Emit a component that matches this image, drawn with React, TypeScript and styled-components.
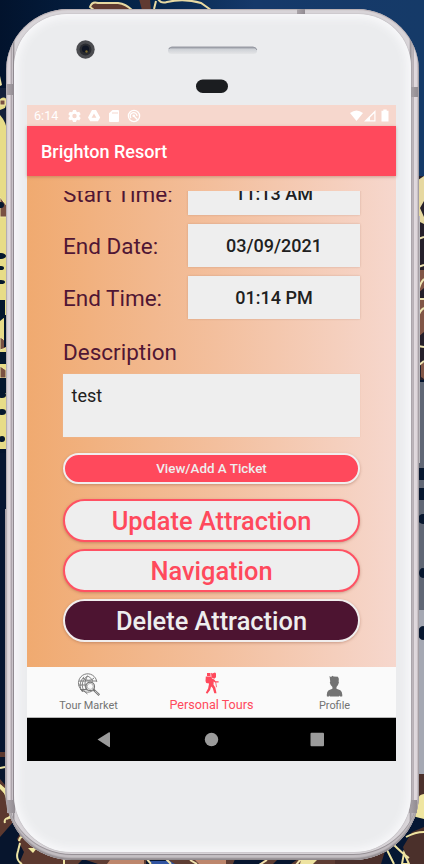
import React from "react";
import styled, { createGlobalStyle } from "styled-components";

const GlobalStyle = createGlobalStyle`
  * { box-sizing: border-box; }
  body { margin: 0; overflow: hidden; font-family: Roboto, "Liberation Sans", sans-serif; }
  button { font-family: inherit; margin: 0; padding: 0; cursor: pointer; }
`;

const Desktop = styled.main`
  position: relative;
  width: 424px;
  height: 864px;
  padding: 9px 5px 4px 6px;
  overflow: hidden;
  background: #03142f;
`;

const Wallpaper = styled.svg`
  position: absolute;
  inset: 0;
`;

const Frame = styled.div`
  position: relative;
  width: 412.5px;
  height: 851px;
  padding: 5px 8px 8px 8px;
  border-radius: 62px 62px 66px 66px;
  background: linear-gradient(90deg, #b5adb3 0, #dbd4da 1.5px, #e0d9de 4px, #a49ca2 5.3px, #d3cdd2 6.3px, #8e888e 7.6px, #d8d4d8 9px, #d8d4d8 403px, #8e888e 405px, #d3cdd2 406px, #a49ca2 407px, #e0d9de 408.5px, #ddd5da 411px, #aaa2a8 412.5px);
  box-shadow: inset 0 1px 1px #b7adb1, inset 0 -2px 2px #8e888c, inset 0 -5px 1px #c8c3c7, inset 0 -6px 0 #918b90;
`;

const Band = styled.i<{ $x: number; $y: number; $w: number; $h: number }>`
  position: absolute;
  left: ${p => p.$x}px;
  top: ${p => p.$y}px;
  width: ${p => p.$w}px;
  height: ${p => p.$h}px;
  background: linear-gradient(90deg, #aaa4a9, #928c92);
`;

const Face = styled.div`
  position: relative;
  height: 838px;
  padding: 91px 14px 0 13px;
  border-radius: 53px 53px 57px 57px;
  background: #ebecee;
  box-shadow: inset 0 0 9px 4px #f8f8fa, 0 0 1px #777278;
`;

const Hardware = styled.svg`
  position: absolute;
  left: 0;
  top: 0;
`;

const Screen = styled.section`
  display: flex;
  flex-direction: column;
  width: 369px;
  height: 656px;
  background: linear-gradient(90deg, #f0aa70 0%, #f3bf9d 51%, #f6d7cd 100%);
`;

const StatusBar = styled.div`
  display: flex;
  align-items: center;
  height: 21px;
  padding: 0 5px 0 7px;
  color: #fff;
  background: #f6d7cd;
  font-size: 12.6px;
`;

const StatusIcons = styled.svg`
  margin-left: auto;
`;

const NoticeIcons = styled.svg`
  margin-left: 9px;
`;

const AppBar = styled.header`
  position: relative;
  flex: none;
  display: flex;
  align-items: center;
  height: 50px;
  padding: 1px 14px 0;
  color: #fff;
  background: #ff495c;
  box-shadow: 0 1px 3px #8b4b3b66;
  font-size: 18px;
  font-weight: 500;
`;

const Viewport = styled.div`
  flex: none;
  height: 476px;
  margin-top: 15px;
  padding: 0 36px;
  overflow: hidden;
`;

const Form = styled.div`
  margin-top: -19px;
`;

const Row = styled.div`
  display: grid;
  grid-template-columns: 125px 172px;
  height: 43px;
  margin-bottom: 9px;
`;

const Label = styled.span`
  align-self: center;
  color: #501634;
  font-size: 22.5px;
  line-height: 27px;
  padding-top: 1px;
`;

const Value = styled.button`
  border: 0;
  color: #202020;
  background: #eee;
  font-size: 18px;
  font-weight: 500;
  box-shadow: 0 0 2px #9f725f60;
`;

const DescriptionTitle = styled.h2`
  margin: 20px 0 8px;
  color: #501634;
  font-size: 22.5px;
  font-weight: 400;
  line-height: 27px;
`;

const Description = styled.div`
  height: 62.5px;
  padding: 11px 8.5px;
  color: #202020;
  background: #eee;
  box-shadow: 0 0 1px #e4bda5;
  font-size: 18px;
  line-height: 22px;
`;

const Actions = styled.div`
  display: flex;
  flex-direction: column;
  gap: 7px;
  margin-top: 16.5px;
`;

const Action = styled.button<{ $tone: "ticket" | "light" | "dark" }>`
  width: 297px;
  height: ${p => p.$tone === "ticket" ? 31 : 43}px;
  margin-bottom: ${p => p.$tone === "ticket" ? 8 : 0}px;
  border: 2px solid ${p => p.$tone === "light" ? "#ff5163" : "#f1eeee"};
  border-radius: 22px;
  color: ${p => p.$tone === "light" ? "#ff495c" : "#eee"};
  background: ${p => p.$tone === "light" ? "#eee" : p.$tone === "dark" ? "#4d1431" : "#ff495c"};
  box-shadow: 0 1px 3px #82432e60;
  font-size: ${p => p.$tone === "ticket" ? 13.4 : 25.4}px;
  font-weight: 500;
  line-height: 1;
  padding-top: ${p => p.$tone === "ticket" ? 1 : 2}px;
`;

const Tabs = styled.nav`
  flex: none;
  display: grid;
  grid-template-columns: repeat(3, 1fr);
  height: 51px;
  background: #fafafa;
  border-bottom: 1px solid #b6b6b6;
`;

const Tab = styled.div<{ $active?: boolean }>`
  display: flex;
  flex-direction: column;
  align-items: center;
  justify-content: flex-end;
  padding-bottom: ${p => p.$active ? 5 : 4}px;
  color: ${p => p.$active ? "#ff495c" : "#737373"};
  font-size: ${p => p.$active ? 12.6 : 10.9}px;
  line-height: 14px;
  svg { margin-bottom: ${p => p.$active ? 3 : 2}px; }
`;

const SystemBar = styled.div`
  flex: none;
  height: 43px;
  background: #000;
`;

/* Patterned wallpaper visible around the handset. */
function Background() {
  return <Wallpaper width="424" height="864" viewBox="0 0 424 864">
    <defs>
      <linearGradient id="sky"><stop stopColor="#02132d" /><stop offset=".35" stopColor="#06264c" /><stop offset=".6" stopColor="#15396a" /><stop offset="1" stopColor="#153a68" /></linearGradient>
    </defs>
    <path fill="url(#sky)" d="M0 0h424v180H0z" />
    <g fill="#603a31" stroke="#e8d9a2" strokeWidth="2">
      <path d="M90 7Q92 1 98 3h20q8 1 14 7H94z" /><path d="m139-1 3 11h9l-1-11z" stroke="none" /><path d="m154 9 2-8M158-1q3 5 9 3 17-4 34 1l10 7" fill="none" />
    </g>
    <path d="M0 76 2 85l-2 1z" fill="#efe5a4" />
    <path d="M0 88h7v13l-4 6 3 4v97H0z" fill="#14213a" />
    <path d="M0 99q6-4 7 3l-2 6-5 2zM0 115q7 8 7 17v317H0z" fill="#e7dc88" />
    <path d="M0 100h5v5H0zM0 197l7 9v11H0zM0 337q7 3 6 11l-6 2zM0 366l6 4v8H0z" fill="#795141" stroke="#efe5a4" />
    <g fill="#04172d"><path d="M0 300h5v17l-5 4zM4 315h3v32H4zM0 352h7v12H0zM0 378h6v15H0z" /><ellipse cx="1" cy="205" rx="3" ry="3" /><ellipse cx="1" cy="256" rx="5" ry="3" /><ellipse cx="1" cy="268" rx="3" ry="2" /><ellipse cx="1" cy="282" rx="4" ry="2" /><ellipse cx="2" cy="395" rx="4" ry="3" /><ellipse cx="2" cy="412" rx="4" ry="3" /><ellipse cx="2" cy="439" rx="3" ry="3" /></g>
    <path d="M0 453h7v300H0z" fill="#061632" />
    <path d="M417 176h7v204h-7z" fill="#251f2a" />
    <path d="m418 180 6-4v25l-4 7 4 9v7l-6-3z" fill="#e6d8a0" />
    <path d="M418 270h6v18l-6 5zm0 28h6v34l-6 5zM421 363h3v16l-3-2z" fill="#815546" />
    <path d="m418 239 6-2m-6 30 6-2m-6 27q2-9 6-13m-6 20 6 0m-6 18q2-7 6-9m-6 38 6 1m-5 18 5-4m-5 26 5-4" stroke="#eee3b1" strokeWidth="2" fill="none" />
    <path d="M417 382h7v411h-7z" fill="#606775" />
    <path d="M417 610h7v183h-7z" fill="#a5a8b3" />
    <g fill="#07172f"><path d="M418 468h6v12h-6zm0 20h6v12h-6z" /><circle cx="423" cy="519" r="5" /><ellipse cx="423" cy="573" rx="4" ry="5" /><ellipse cx="423" cy="633" rx="5" ry="7" /></g>
    <path d="M0 752h63l20 114H0z" fill="#5c392f" />
    <path d="M0 757h7l5 17-7 11-5-6zM0 837l14-16 12 2-9 16 7 13-5 12H0z" fill="#07152d" />
    <path d="m0 785 5 8q7 18 8 25-10-1-8 5m2-4q5-5 10-2M19 841q1-7 9-3m-8 5-2 8q-3 9 4 13M64 859v5m9-4 1 4M0 768l5-1" stroke="#eee5a5" strokeWidth="2" fill="none" />
    <path d="m28 848 9 0-4 5zM0 784l6 5-1 5-5-5z" fill="#f0e7a0" />
    <path d="M335 864V854q29-2 49-19 24-22 34-61h6v90z" fill="#4b302b" />
    <path d="M419 797q0-2 5-3v25h-9l1-14z" fill="#efe5a0" />
    <path d="m404 814 20 5v8l-12 5-9 15 5 17h-27l4-13z" fill="#061733" />
    <path d="m384 844 10 20m-1-20q10 10 16 14m-3-21q9-5 18-5M404 853l5 11h-7z" stroke="#eee3a0" strokeWidth="2" fill="none" />
    <path d="M65 858h270v6H65z" fill="#5e3d33" />
    <path d="M110 860h34v4h-37zM195 860h31v4h-27z" fill="#bd866c" /><path d="M301 860h16l-4 4h-13z" fill="#eee3a0" />
    <path d="m83 859 15 5H78zm63 0h22v5h-22zM235 859h30l-5 5h-27zm43 0h20l-7 5h-18z" fill="#07162f" />
    <path d="M150 861h20l5 3h-23z" fill="#3154a0" />
    <path d="m146 858 5 6m15-5 5 5m19-4 7 4m70-4-8 5m42-6-5 6" stroke="#f2e4b0" strokeWidth="2" fill="none" />
    <path d="M417 216h3v247h-3z" fill="#bbb9be" /><path d="M5 509h4v300H7q-2-10-2-20z" fill="#aaa2a8" />
  </Wallpaper>;
}

function Notifications() {
  return <NoticeIcons width="75" height="15" viewBox="0 0 75 15">
    <g fill="#fff">
      <path fillRule="evenodd" d="m6 2h3l.4 1.6 1.2.7 1.6-.6 1.5 2.5-1.3 1.1v1.5l1.3 1.1-1.5 2.5-1.6-.6-1.2.7L9 14H6l-.4-1.5-1.2-.7-1.6.6-1.5-2.5 1.3-1.1V7.3L1.3 6.2l1.5-2.5 1.6.6 1.2-.7zm1.5 3.8a2.2 2.2 0 1 0 0 4.4 2.2 2.2 0 0 0 0-4.4z" />
      <path fillRule="evenodd" d="m25 2h4l4.2 7.4-2.2 3.8h-7.8L21 9.4zm2 3.5-2.4 4.2h4.8z" />
      <path d="M45.5 2H51q1 0 1 1v10q0 1-1 1h-8q-1 0-1-1V5.2z" />
    </g>
    <g stroke="#f6d7cd"><path d="M46 4v2m2-2v2m2-2v2" /></g>
    <g fill="none" stroke="#fff" strokeWidth="1.3"><circle cx="67" cy="8" r="5.6" /><path d="M64 10.2a3.4 3.4 0 1 1 6-2.2M66.5 7.5l4 4.2" /></g>
    <circle cx="66.7" cy="7.7" r="1.3" fill="#fff" />
  </NoticeIcons>;
}

function GlobeSearch() {
  return <svg width="24" height="24" viewBox="0 0 24 24" fill="none" stroke="currentColor" strokeWidth=".9">
    <path d="M17.8 15.8A9.2 9.2 0 1 1 19.8 9M2 8h17M1.5 12h9M3 16.5h7M6 5c3 3 8 3 11 0M4 18c3-2 6-1.5 8 0" />
    <path d="M10.5 3C3 8 4 17 10.5 21M10.5 3c-3 5-3 9-1.5 13M10.5 3c4 2 5 4 5 5.5M7 3.8C2 9 2 15 6 19" />
    <circle cx="13.2" cy="13.4" r="4.3" fill="#fafafa" strokeWidth="1.2" /><circle cx="13.2" cy="13.4" r="3" strokeWidth=".5" />
    <path d="m16.3 16.5 6 5.6" strokeWidth="2.2" /><path d="m18 18 3.8 3.6" stroke="#fafafa" strokeWidth=".6" />
  </svg>;
}

function Hiker() {
  return <svg width="16" height="23" viewBox="0 0 16 23" fill="currentColor">
    <path d="M3 1h3.5v3H3zm4-.3 1.3.7L11 .6l1 1v3.6l-1.8 1.6-2.7-1.2zM1.8 4.5H7l1 2 2.2 1 1.4 1.8h3v1.3h-3.5L9.7 9.5l-.2 3.3 1.8 2.8 1.2 5.7h-2.2L8.7 16l-1.6-1.5-1 3.4-2.8 3.9-1.5-1 2.3-4.3 1-5-2.9-.4-.7-2z" />
    <path d="m11.7 10.2.8 5" stroke="currentColor" strokeWidth=".8" />
  </svg>;
}

function Person() {
  return <svg width="17" height="22" viewBox="0 0 18 22" preserveAspectRatio="none" fill="currentColor">
    <path d="M3.7 1 5.2 2 7 .7l1 .8 4.6.3 1 2-.2 2.8.3 1-1 2.3-1.6 2.2v1.6l4.1 1.5q1.9 1 2.1 4.7l-.2 1.7h-2.2l-.6-1-.4 1H4.2l-.5-1-.4 1H1l-.2-1.7q.1-3.7 2-4.7l4-1.5v-1.6L5 9.9 4 7.6l.5-1z" />
  </svg>;
}

export default function App() {
  return <>
    <GlobalStyle />
    <Desktop>
      <Background />
      <Frame>
        <Band $x={1} $y={75} $w={7} $h={11} />
        <Band $x={404} $y={78} $w={8} $h={10} />
        <Band $x={291} $y={0} $w={8} $h={5} />
        <Band $x={1} $y={791} $w={8} $h={13} />
        <Band $x={403} $y={791} $w={8} $h={13} />
        <Face>
          <Hardware width="397" height="90" viewBox="14 14 397 90">
            <defs><linearGradient id="speaker" x2="0" y2="1"><stop stopColor="#91949e" /><stop offset=".35" stopColor="#cfd2d7" /><stop offset="1" stopColor="#e4e5e7" /></linearGradient></defs>
            <circle cx="85.5" cy="49.5" r="9.2" fill="#4b4c50" /><circle cx="85.5" cy="49.5" r="6" fill="#292b30" /><circle cx="85.5" cy="49" r="3.6" fill="#101624" /><circle cx="86.5" cy="51.5" r="1.2" fill="#806e31" />
            <rect x="168" y="47" width="89" height="7" rx="3.5" fill="url(#speaker)" /><path d="M169 49q1-2 3-2h81q2 0 4 3" fill="none" stroke="#989ba4" />
            <rect x="196" y="79.5" width="32" height="13.5" rx="6.75" fill="#1b1d20" />
          </Hardware>
          <Screen>
            <StatusBar>6:14<Notifications />
              <StatusIcons width="41" height="15" viewBox="0 0 41 15" fill="#fff"><path d="M0 5q6.5-5 13 0L6.5 13z" /><path fillRule="evenodd" d="M25.5 2v11.5H14zm-1.2 3.2L20 9.5v2.8h4.3z" /><path d="M31.5 2.8h1.8V1.5h3.4v1.3h1.8v10.7h-7z" /></StatusIcons>
            </StatusBar>
            <AppBar>Brighton Resort</AppBar>
            <Viewport>
              <Form>
                <Row><Label>Start Time:</Label><Value>11:13 AM</Value></Row>
                <Row><Label>End Date:</Label><Value>03/09/2021</Value></Row>
                <Row><Label>End Time:</Label><Value>01:14 PM</Value></Row>
                <DescriptionTitle>Description</DescriptionTitle>
                <Description>test</Description>
                <Actions>
                  <Action $tone="ticket">View/Add A Ticket</Action>
                  <Action $tone="light">Update Attraction</Action>
                  <Action $tone="light">Navigation</Action>
                  <Action $tone="dark">Delete Attraction</Action>
                </Actions>
              </Form>
            </Viewport>
            <Tabs>
              <Tab><GlobeSearch />Tour Market</Tab>
              <Tab $active><Hiker />Personal Tours</Tab>
              <Tab><Person />Profile</Tab>
            </Tabs>
            <SystemBar><svg width="369" height="43" viewBox="0 0 369 43" fill="#9b9b9b"><path d="M70.5 21.5 82 14.3q1-.5 1 1v13q0 1.5-1 .8z" /><circle cx="184.5" cy="21.5" r="6.7" /><rect x="283.5" y="14.8" width="13.5" height="13.5" rx="1" /></svg></SystemBar>
          </Screen>
        </Face>
      </Frame>
    </Desktop>
  </>;
}
